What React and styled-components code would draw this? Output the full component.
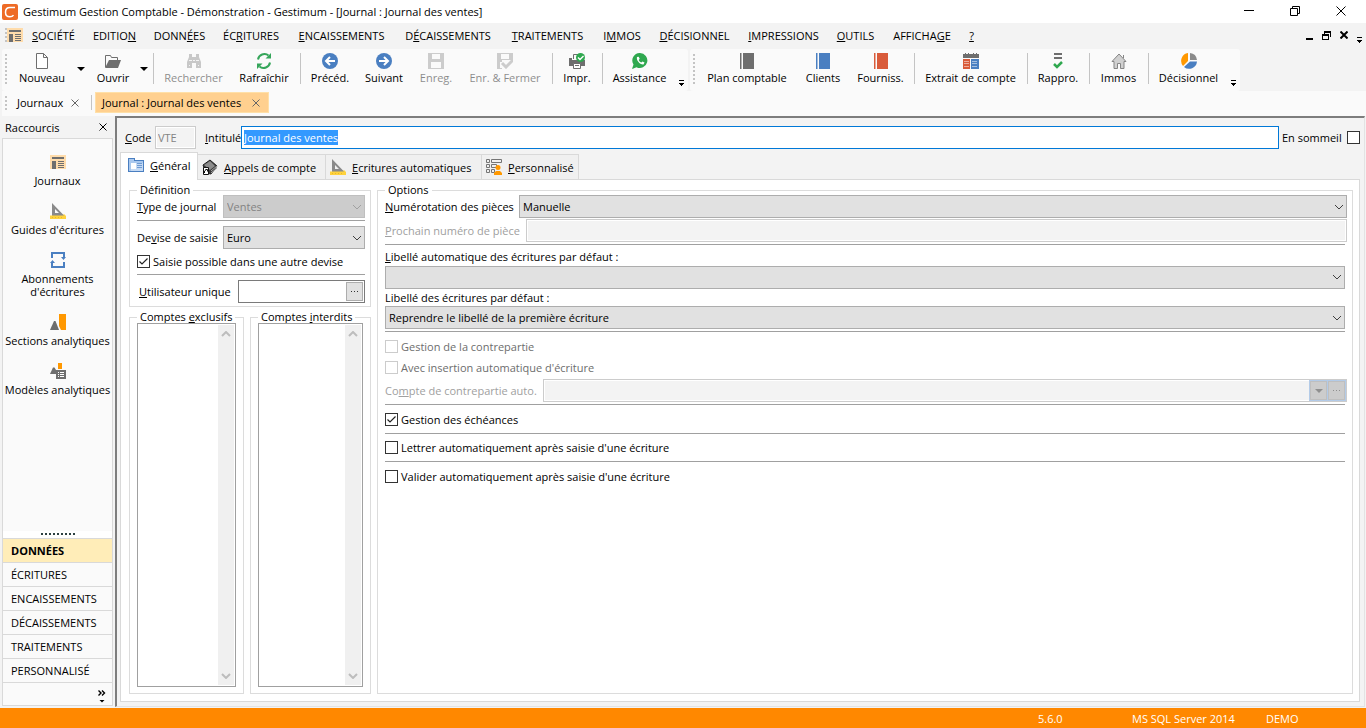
import React, { useEffect, useRef } from "react";
import styled, { createGlobalStyle, css } from "styled-components";

const Global = createGlobalStyle`
  *, *::before, *::after { box-sizing: border-box; }
  body {
    margin: 0;
    background: #f3f3f3;
    color: #000;
    font: 11px/13px "Open Sans", "Noto Sans", sans-serif;
  }
  button, input, select { font: inherit; color: inherit; margin: 0; }
  button { background: none; border: 0; padding: 0; white-space: nowrap; }
  svg { display: block; flex: none; }
`;

/* ---------- window frame ---------- */

const Window = styled.div`
  display: flex;
  flex-direction: column;
  min-height: 100vh;
`;

const TitleBar = styled.header`
  display: flex;
  align-items: center;
  gap: 5px;
  height: 23px;
  padding-left: 2px;
  background: #fff;
`;

const Title = styled.h1`
  flex: 1;
  margin: 0;
  font-size: 11px;
  font-weight: 400;
  white-space: nowrap;
`;

const WindowControls = styled.div`
  display: flex;
  align-self: flex-start;
  padding-right: 2px;
`;

const WindowButton = styled.button`
  display: flex;
  align-items: center;
  justify-content: center;
  width: 46px;
  height: 21px;
`;

const MenuBar = styled.nav`
  display: flex;
  align-items: center;
  height: 26px;
  padding: 0 0 2px 5px;
`;

const MenuItem = styled.button`
  width: ${(p) => p.$w}px;
  text-align: center;
`;

const Spacer = styled.span`
  flex: 1;
`;

const ChildControls = styled.div`
  display: flex;
  align-items: center;
  gap: 9px;
  padding-right: 4px;
`;

const Grip = styled.div`
  flex: none;
  width: 2px;
  height: ${(p) => p.$h}px;
  background: repeating-linear-gradient(#c4c4c4 0 2px, transparent 2px 4px);
`;

const OverflowButton = styled.button`
  display: flex;
  align-self: flex-end;
  justify-content: center;
  width: 14px;
  padding-bottom: ${(p) => p.$bottom}px;
`;

/* ---------- toolbars ---------- */

const ToolRow = styled.div`
  display: flex;
  gap: 2px;
  height: 42px;
  padding-left: 2px;
`;

const ToolBar = styled.div`
  display: flex;
  align-items: center;
  padding: 0 0 3px 3px;
  border-radius: 3px;
  background: #fafafa;
`;

const ToolGripBox = styled.div`
  width: 5px;
`;

const ToolButton = styled.button`
  display: flex;
  flex-direction: column;
  align-items: center;
  gap: 2px;
  width: ${(p) => p.$w}px;
  color: #000;
  &:disabled { opacity: 0.45; }
`;

const DropButton = styled.button`
  display: flex;
  justify-content: center;
  width: ${(p) => p.$w}px;
`;

const ToolSeparator = styled.span`
  width: 6px;
  height: 31px;
  background: linear-gradient(#c4c4c4, #c4c4c4) 3px 0 / 1px 100% no-repeat;
`;

/* ---------- document tabs ---------- */

const DocTabs = styled.div`
  display: flex;
  align-items: center;
  height: 25px;
  margin-left: 2px;
  padding: 0 0 2px 3px;
  background: #fafafa;
`;

const DocTab = styled.div`
  display: flex;
  align-items: center;
  justify-content: space-between;
  height: 21px;
  width: ${(p) => (p.$active ? 174 : 80)}px;
  padding: 0 8px 0 6px;
  ${(p) =>
    p.$active
      ? css`
          background: #ffd08f;
          border: 1px solid #ffe0a8;
        `
      : css`
          padding-left: 10px;
        `}
`;

const DocTabSeparator = styled.span`
  width: 1px;
  height: 15px;
  margin: 0 3px 0 4px;
  background: #c4c4c4;
`;

/* ---------- body ---------- */

const Body = styled.div`
  display: flex;
  flex: 1;
`;

const Sidebar = styled.aside`
  display: flex;
  flex-direction: column;
  width: 115px;
  padding: 0 2px 2px;
`;

const SideHeader = styled.div`
  display: flex;
  align-items: center;
  justify-content: space-between;
  height: 22px;
  padding: 0 6px 0 3px;
`;

const SideBox = styled.div`
  display: flex;
  flex: 1;
  flex-direction: column;
  border: 1px solid #d9d9d9;
  background: #fafafa;
`;

const Shortcuts = styled.div`
  display: flex;
  flex: 1;
  flex-direction: column;
  gap: 16px;
  padding-top: 15px;
`;

const Shortcut = styled.button`
  display: flex;
  flex-direction: column;
  align-items: center;
  gap: 4px;
  text-align: center;
`;

const Splitter = styled.div`
  display: flex;
  justify-content: center;
  height: 7px;
  padding-top: 2px;
  background: #fff;
`;

const SplitterDots = styled.span`
  width: 34px;
  height: 2px;
  background: repeating-linear-gradient(90deg, #2c4040 0 2px, transparent 2px 4px);
`;

const Category = styled.button`
  height: 24px;
  padding-left: 8px;
  border-top: 1px solid #d9d9d9;
  text-align: left;
  ${(p) =>
    p.$active &&
    css`
      background: #ffedb8;
      font-weight: 700;
    `}
`;

const SideFooter = styled.div`
  display: flex;
  justify-content: flex-end;
  height: 23px;
  padding: 3px 6px 0 0;
  border-top: 1px solid #d9d9d9;
`;

const Document = styled.main`
  display: flex;
  flex: 1;
  flex-direction: column;
  min-width: 0;
  margin: 0 1px 1px 0;
  padding: 8px 4px 4px 3px;
  border: 1px solid #e3e3e3;
  border-top: 2px solid #7d7d7d;
  border-left: 2px solid #7d7d7d;
`;

const Heading = styled.div`
  display: flex;
  align-items: center;
  height: 23px;
  padding-left: 5px;
`;

const Label = styled.label`
  flex: none;
  width: ${(p) => (p.$w ? `${p.$w}px` : "auto")};
  padding-left: ${(p) => (p.$inset ? 2 : 0)}px;
  color: ${(p) => (p.$dim ? "#a0a0a0" : "#000")};
  white-space: nowrap;
`;

const TextInput = styled.input.attrs({ type: "text" })`
  width: ${(p) => (p.$w ? `${p.$w}px` : "auto")};
  flex: ${(p) => (p.$w ? "none" : 1)};
  min-width: 0;
  height: 23px;
  padding: 0 2px;
  border: 1px solid #7a7a7a;
  background: #fff;
  outline: none;
  &:disabled {
    border-color: #ccc;
    background: #f3f3f3;
    color: #838383;
    box-shadow: inset 0 0 0 1px #fff;
  }
  &:focus { border-color: #0078d7; }
  &::selection { background: #3399ff; color: #fff; }
`;

const TitleGap = styled.span`
  width: 9px;
`;

const SleepLabel = styled.label`
  display: flex;
  align-items: center;
  justify-content: space-between;
  width: 81px;
  padding-left: 3px;
  white-space: nowrap;
`;

const Tick = styled.input.attrs({ type: "checkbox" })`
  flex: none;
  appearance: none;
  width: 13px;
  height: 13px;
  border: 1px solid #333;
  background: #fff;
  &:disabled { border-color: #ccc; }
`;

const TickBox = styled.span`
  display: grid;
  & > * { grid-area: 1 / 1; }
  & > svg { pointer-events: none; z-index: 1; }
  & > input:not(:checked) + svg { visibility: hidden; }
`;

const CheckRow = styled.label`
  display: flex;
  align-items: center;
  gap: 3px;
  height: ${(p) => p.$h || 21}px;
  color: ${(p) => (p.$dim ? "#6d6d6d" : "#000")};
  white-space: nowrap;
`;

/* ---------- page tabs ---------- */

const Tabs = styled.div`
  display: flex;
  align-items: flex-end;
  height: 30px;
  padding-top: 3px;
`;

const Tab = styled.button`
  display: flex;
  align-items: center;
  gap: 6px;
  width: ${(p) => p.$w}px;
  height: 25px;
  padding: 0 4px;
  border: 1px solid #d9d9d9;
  border-width: 1px 1px 0 0;
  background: #f0f0f0;
  ${(p) =>
    p.$active &&
    css`
      height: 28px;
      margin-bottom: -1px;
      padding: 0 7px 3px;
      border-left-width: 1px;
      background: #fff;
      z-index: 1;
    `}
`;

const TabPage = styled.section`
  display: flex;
  flex: 1;
  gap: 6px;
  padding: 5px 6px 7px 8px;
  border: 1px solid #d9d9d9;
  background: #fff;
`;

const LeftColumn = styled.div`
  display: flex;
  flex: none;
  flex-direction: column;
  gap: 5px;
  width: 242px;
`;

const Group = styled.fieldset`
  display: flex;
  flex-direction: column;
  flex: ${(p) => (p.$grow ? 1 : "none")};
  min-width: 0;
  margin: 0;
  padding: ${(p) => p.$pad};
  border: 1px solid #dcdcdc;
`;

const Legend = styled.legend`
  padding: 0 3px;
  line-height: 10px;
  white-space: nowrap;
`;

const ListGroups = styled.div`
  display: grid;
  flex: 1;
  grid-template-columns: 115px 1fr;
  gap: 6px;
`;

const ListBox = styled.div`
  display: flex;
  flex: 1;
  justify-content: flex-end;
  padding: 1px;
  border: 1px solid #a0a0a0;
`;

const ScrollTrack = styled.div`
  display: flex;
  flex-direction: column;
  align-items: center;
  justify-content: space-between;
  width: 16px;
  padding: 6px 0;
  background: #f0f0f0;
`;

const Row = styled.div`
  display: flex;
  align-items: center;
  height: ${(p) => p.$h || 23}px;
  margin-right: ${(p) => (p.$wide ? -2 : 0)}px;
`;

const Rule = styled.hr`
  width: 100%;
  height: 1px;
  margin: ${(p) => p.$m};
  border: 0;
  background: #a0a0a0;
`;

const SelectBox = styled.div`
  display: grid;
  flex: 1;
  min-width: 0;
  align-items: center;
  & > * { grid-area: 1 / 1; }
  & > svg { justify-self: end; margin-right: 3px; pointer-events: none; z-index: 1; }
`;

const SelectInput = styled.select`
  appearance: none;
  width: 100%;
  height: 23px;
  padding: 0 3px;
  border: 1px solid #adadad;
  border-radius: 0;
  background: #e1e1e1;
  &:disabled {
    border-color: #bfbfbf;
    background: #ccc;
    color: #838383;
    opacity: 1;
  }
`;

const Combo = styled.div`
  display: flex;
  flex: 1;
  min-width: 0;
  align-items: center;
  height: 23px;
  padding: 1px;
  border: 1px solid ${(p) => (p.$dim ? "#ccc" : "#7a7a7a")};
  background: #fff;
`;

const ComboInput = styled.input.attrs({ type: "text" })`
  flex: 1;
  min-width: 0;
  height: 19px;
  padding: 0 2px;
  border: 0;
  outline: none;
  background: #fff;
  &:disabled { background: #f3f3f3; }
`;

const ComboButtons = styled.span`
  display: flex;
  gap: 1px;
  margin: -1px;
  padding: 1px;
  background: #b3cbe8;
`;

const ComboButton = styled.button`
  display: flex;
  align-items: center;
  justify-content: center;
  width: 17px;
  height: 19px;
  border: 1px solid #adadad;
  background: #e1e1e1;
  &:disabled { border-color: #bfbfbf; background: #ccc; }
`;

const StatusBar = styled.footer`
  display: flex;
  align-items: center;
  justify-content: flex-end;
  height: 20px;
  padding-right: 67px;
  background: #ff8800;
  color: #fff;
`;

const StatusItem = styled.span`
  width: ${(p) => p.$w}px;
  white-space: nowrap;
`;

/* ---------- icons ---------- */

const Icon = ({ children, w = 16, h = 16, crisp }) => (
  <svg width={w} height={h} viewBox={`0 0 ${w} ${h}`} fill="none" aria-hidden="true" shapeRendering={crisp ? "crispEdges" : "auto"}>
    {children}
  </svg>
);

const GREY = "#6e6e6e";
const BLUE = "#4a7fc1";
const ORANGE = "#ff9800";

const LogoIcon = () => (
  <Icon>
    <rect width="16" height="16" rx="2" fill="#ee6b26" />
    <path d="M13 3.500H8C5 3.500 3.500 5.400 3.500 8.200c0 2.900 1.700 4.600 4.400 4.600 1.700 0 3-.8 3.600-1.700" stroke="#fff" strokeWidth="1.500" />
  </Icon>
);
const JournalIcon = () => (
  <Icon crisp>
    <path fill="#ffdcab" d="M0 1h16v14H0z" />
    <path fill={GREY} d="M2 3h12v2H2zM2 7h4v8H2zM8 7h6v1H8zM8 9h6v1H8zM8 11h6v1H8zM8 13h6v1H8z" />
  </Icon>
);
const SquareIcon = () => (
  <Icon>
    <path fill="#ffd23c" d="M0 12.500h2v-1h13v1h1V16H0z" />
    <path fillRule="evenodd" fill="#8a8a8a" d="M2 0l12 12.500H2zM5 6v4h4z" />
    <path d="M2.500 14v1M5.500 14v1M8.500 14v1M11.500 14v1" stroke="#e8b92a" />
  </Icon>
);
const CycleIcon = () => (
  <Icon>
    <path d="M2 6V1h12v5M14 10v5H2v-5" stroke={BLUE} strokeWidth="2" />
    <path d="M11 5h5l-2.500 3zM0 11h5L2.500 8z" fill={BLUE} />
  </Icon>
);
const SectionsIcon = () => (
  <Icon>
    <path fill={GREY} d="M0 16l4-9h1.500L9 16z" />
    <path fill={ORANGE} d="M9 0h7v16h-5l-2-4z" />
  </Icon>
);
const ModelsIcon = () => (
  <Icon>
    <path fill={GREY} d="M0 11l3-6.500h1.500L6 7v4z" />
    <path fill={ORANGE} d="M8 0h4v6H8z" />
    <path fill={GREY} d="M6 7h10v9H6z" />
    <path d="M8 9.500h1M8 11.500h1M8 13.500h1M10 9.500h4M10 11.500h4M10 13.500h4" stroke="#fff" />
  </Icon>
);
const NewIcon = () => (
  <Icon>
    <path d="M2.500 .5h7l4 4v11h-11zM9.500 .5v4h4" stroke={GREY} fill="#fff" />
  </Icon>
);
const OpenIcon = () => (
  <Icon>
    <path d="M.5 14V2.500h5l1 2h6V7" stroke={GREY} />
    <path fill={GREY} d="M4 7h12l-3 8H0z" />
  </Icon>
);
const SearchIcon = () => (
  <Icon>
    <path fill="#8d8d8d" d="M3 1h3v3h4V1h3v3l2 5v6h-5v-5H6v5H1V9l2-5z" />
    <path d="M3 7.500h3M10 7.500h3M3 12.500h1M12 12.500h1M7 7.500h2" stroke="#eee" />
  </Icon>
);
const RefreshIcon = () => (
  <Icon>
    <path d="M2 6.500a6.500 6.500 0 0 1 10.500-4M14 9.500a6.500 6.500 0 0 1-10.500 4" stroke="#35a65a" strokeWidth="2" />
    <path d="M9.500 5.500H15V0zM6.500 10.500H1V16z" fill="#35a65a" />
  </Icon>
);
const ArrowIcon = ({ back }) => (
  <Icon>
    <circle cx="8" cy="8" r="8" fill={BLUE} />
    <path d={back ? "M13 8H4M8 4L4 8l4 4" : "M3 8h9M8 4l4 4-4 4"} stroke="#fff" strokeWidth="2" />
  </Icon>
);
const SaveIcon = ({ check }) => (
  <Icon>
    <path fillRule="evenodd" fill="#969696" d="M0 0h16v16H0zM4 1v5h8V1zM3 9v6h10V9z" />
    <path fill="#fafafa" d="M4 1h5v4H4zM3 9h10v6H3z" />
    {check && <path fill="#fafafa" d="M5 7h11v9H5z" />}
    {check && <path d="M5 10l4 4 7-7" stroke="#969696" strokeWidth="3" />}
  </Icon>
);
const PrintIcon = () => (
  <Icon>
    <path d="M4.500 6V1.500h6" stroke={GREY} />
    <path fill={GREY} d="M0 5h3v2h13v6H0z" />
    <path fill="#fff" stroke={GREY} d="M4.500 10.500h7v5h-7z" />
    <path d="M6 12.500h4" stroke={GREY} />
    <circle cx="11.500" cy="4.500" r="4.500" fill="#2fa84f" />
    <path d="M9 4.500l2 2 3.500-3.500" stroke="#fff" strokeWidth="1.400" />
  </Icon>
);
const AssistIcon = () => (
  <Icon>
    <path d="M8 0a7.500 7.500 0 1 1-3.500 14.200L0 16l1.500-4.500A7.500 7.500 0 0 1 8 0z" fill="#2fa84f" />
    <path d="M5 4c-1 3 3 8 6.500 7.500l1-2-2-1-1.200 1C8 9 7 8 6.700 7l1-1.200-1-2z" fill="#fff" />
  </Icon>
);
const BookIcon = ({ color }) => (
  <Icon w={14} crisp>
    <path fill={color} d="M0 0h1v16H0zM3 0h11v16H3z" />
    <path fill={color} opacity=".5" d="M1 0h1v16H1z" />
  </Icon>
);
const StatementIcon = () => (
  <Icon crisp>
    <path fill={GREY} d="M0 1h2V0h1v1h2V0h1v1h4V0h1v1h2V0h1v1h2v4H0z" />
    <path fill="#d95b3a" d="M0 6h7v10H0z" />
    <path fill={BLUE} d="M8 6h8v10H8z" />
    <path stroke="#fff" opacity=".5" d="M1 8.500h5M1 10.500h5M1 13.500h5M9 8.500h5M9 10.500h5M9 13.500h5" />
  </Icon>
);
const ReconcileIcon = () => (
  <Icon>
    <path fill={GREY} d="M4 0h8v2H4zM4 4h8v2H4z" />
    <path d="M4 11l3 3 5-5" stroke="#2fa84f" strokeWidth="2.500" />
  </Icon>
);
const HouseIcon = () => (
  <Icon>
    <path fill="#d0d0d0" stroke="#858585" d="M1 8.500L8 1l7 7.500h-2v7H9.500v-5h-3v5H3v-7z" />
    <path d="M12.500 2v3" stroke="#858585" />
  </Icon>
);
const PieIcon = () => (
  <Icon>
    <path fill={ORANGE} d="M7 0v8l-5 5A8 8 0 0 1 7 0z" />
    <path fill="#8a8a8a" d="M9 0a8 8 0 0 1 7 7H9z" />
    <path fill={BLUE} d="M3 14l6-5.500h7A8 8 0 0 1 3 14z" />
  </Icon>
);
const GeneralIcon = () => (
  <Icon crisp>
    <path fill="#4a7fc1" d="M0 1h7v2h9v12H0z" />
    <path fill="#a9c8ee" d="M1 2h5v2h9v10H1z" />
    <path fill="#c5daf4" d="M3 6h12v8H3z" />
    <path fill="#fff" d="M3 6h5v6H3z" />
    <path stroke="#6f9bd3" d="M9 6.500h5M9 8.500h5M9 10.500h5" />
  </Icon>
);
const CallsIcon = () => (
  <Icon>
    <path d="M1 6l7-5 7 6-6 8-5-1z" fill="#3a3a3a" stroke="#222" />
    <path d="M2 6l6-4 5 5-5 4z" fill="#8c8c8c" />
    <path d="M9 12l6-5M9 14l6-5" stroke="#aaa" />
    <path d="M1.500 8.500h5v7h-5z" fill="#fff" stroke="#111" />
    <path d="M2.500 14v-2l2-1.500M3.500 10.500h2v2" stroke="#111" />
  </Icon>
);
const CustomIcon = () => (
  <Icon>
    <path d="M.5 .5h3v3h-3zM.5 5.500h3v3h-3zM.5 10.500h3v3h-3zM5.500 .5h10v3h-10zM5.500 5.500h5v3h-5zM5.500 10.500h3v3h-3z" stroke="#757575" />
    <circle cx="12" cy="8.500" r="2.500" fill={ORANGE} />
    <path fill={ORANGE} d="M8 16v-2l2-2h4l2 2v2z" />
  </Icon>
);
const Cross = ({ size = 8, color = "#000", width = 1 }) => (
  <Icon w={size} h={size}>
    <path d={`M.5 .5l${size - 1} ${size - 1}M${size - 0.5} .5l-${size - 1} ${size - 1}`} stroke={color} strokeWidth={width} />
  </Icon>
);
const Chevron = ({ color = "#404040", width = 1, up }) => (
  <Icon w={10} h={6}>
    <path d={up ? "M1 5l4-4 4 4" : "M1 1l4 4 4-4"} stroke={color} strokeWidth={width} />
  </Icon>
);
const Triangle = ({ color = "#000", w = 8 }) => (
  <Icon w={w} h={w / 2}>
    <path d={`M0 0h${w}l-${w / 2} ${w / 2}z`} fill={color} />
  </Icon>
);
const MoreIcon = () => (
  <Icon w={5} h={6} crisp>
    <path d="M0 0h5v1H0zM0 3h5v1H0zM1 4h3v1H1zM2 5h1v1H2z" fill="#000" />
  </Icon>
);
const Dots = ({ color = "#333" }) => (
  <Icon w={8} h={1} crisp>
    <path d="M0 0h1v1H0zM3 0h1v1H3zM6 0h1v1H6z" fill={color} />
  </Icon>
);
const FooterIcon = () => (
  <Icon w={8} h={14}>
    <path d="M.5 1.500L3 4 .5 6.500M4 1.500L6.500 4 4 6.500" stroke="#000" strokeWidth="1.400" />
    <path d="M1.500 11h5L4 13.500z" fill="#000" />
  </Icon>
);

/* ---------- data ---------- */

const menus = [
  ["", "S", "OCIÉTÉ", 61],
  ["EDITIO", "N", "", 61],
  ["DONN", "É", "ES", 69],
  ["ÉC", "R", "ITURES", 74],
  ["", "E", "NCAISSEMENTS", 107],
  ["D", "É", "CAISSEMENTS", 106],
  ["", "T", "RAITEMENTS", 93],
  ["I", "M", "MOS", 56],
  ["", "D", "ÉCISIONNEL", 89],
  ["", "I", "MPRESSIONS", 89],
  ["", "O", "UTILS", 55],
  ["AFFICHA", "G", "E", 78],
  ["", "?", "", 21],
];

const mainTools = [
  { label: "Nouveau", icon: <NewIcon />, w: 64 },
  { drop: "Nouveau : options", w: 14 },
  { label: "Ouvrir", icon: <OpenIcon />, w: 50 },
  { drop: "Ouvrir : options", w: 12 },
  null,
  { label: "Rechercher", icon: <SearchIcon />, w: 75, disabled: true },
  { label: "Rafraîchir", icon: <RefreshIcon />, w: 66 },
  null,
  { label: "Précéd.", icon: <ArrowIcon back />, w: 54 },
  { label: "Suivant", icon: <ArrowIcon />, w: 54 },
  { label: "Enreg.", icon: <SaveIcon />, w: 50, disabled: true },
  { label: "Enr. & Fermer", icon: <SaveIcon check />, w: 88, disabled: true },
  null,
  { label: "Impr.", icon: <PrintIcon />, w: 44 },
  null,
  { label: "Assistance", icon: <AssistIcon />, w: 69 },
];

const linkTools = [
  { label: "Plan comptable", icon: <BookIcon color={GREY} />, w: 98 },
  { label: "Clients", icon: <BookIcon color={BLUE} />, w: 54 },
  { label: "Fourniss.", icon: <BookIcon color="#d95b3a" />, w: 61 },
  null,
  { label: "Extrait de compte", icon: <StatementIcon />, w: 107 },
  null,
  { label: "Rappro.", icon: <ReconcileIcon />, w: 56 },
  null,
  { label: "Immos", icon: <HouseIcon />, w: 53 },
  null,
  { label: "Décisionnel", icon: <PieIcon />, w: 75 },
];

const shortcuts = [
  [<JournalIcon />, "Journaux"],
  [<SquareIcon />, "Guides d'écritures"],
  [<CycleIcon />, "Abonnements", "d'écritures"],
  [<SectionsIcon />, "Sections analytiques"],
  [<ModelsIcon />, "Modèles analytiques"],
];

const categories = ["DONNÉES", "ÉCRITURES", "ENCAISSEMENTS", "DÉCAISSEMENTS", "TRAITEMENTS", "PERSONNALISÉ"];

/* ---------- parts ---------- */

const Tools = ({ items }) => (
  <ToolBar>
    <ToolGripBox><Grip $h={30} /></ToolGripBox>
    {items.map((t, i) => {
      if (!t) return <ToolSeparator key={i} />;
      if (t.drop) return <DropButton key={i} $w={t.w} aria-label={t.drop}><Triangle /></DropButton>;
      return (
        <ToolButton key={i} $w={t.w} disabled={t.disabled}>
          {t.icon}
          <span>{t.label}</span>
        </ToolButton>
      );
    })}
    <OverflowButton $bottom={2} aria-label="Plus de boutons"><MoreIcon /></OverflowButton>
  </ToolBar>
);

const Dropdown = ({ id, value, disabled }) => (
  <SelectBox>
    <SelectInput id={id} disabled={disabled} defaultValue={value}>
      <option>{value}</option>
    </SelectInput>
    <Chevron color={disabled ? "#a0a0a0" : "#404040"} />
  </SelectBox>
);

const Check = ({ h, disabled, checked, children }) => (
  <CheckRow $h={h} $dim={disabled}>
    <TickBox>
      <Tick disabled={disabled} defaultChecked={checked} />
      <Icon w={13} h={13}>
        <path d="M2.500 6.500L5 9l5.500-5.500" stroke="#222" strokeWidth="1.200" />
      </Icon>
    </TickBox>
    {children}
  </CheckRow>
);

const AccountList = ({ children }) => (
  <Group $pad="1px 7px 6px">
    <Legend>{children}</Legend>
    <ListBox>
      <ScrollTrack>
        <Chevron up color="#bdbdbd" width={2} />
        <Chevron color="#bdbdbd" width={2} />
      </ScrollTrack>
    </ListBox>
  </Group>
);

export default function App() {
  const titleRef = useRef(null);
  useEffect(() => {
    titleRef.current.focus();
    titleRef.current.select();
  }, []);

  return (
    <Window>
      <Global />
      <TitleBar>
        <LogoIcon />
        <Title>Gestimum Gestion Comptable - Démonstration - Gestimum - [Journal : Journal des ventes]</Title>
        <WindowControls>
          <WindowButton aria-label="Réduire">
            <Icon w={10} h={1} crisp><path d="M0 0h10v1H0z" fill="#000" /></Icon>
          </WindowButton>
          <WindowButton aria-label="Restaurer">
            <Icon w={10} h={10}><path d="M.5 2.500h7v7h-7zM2.500 2.500v-2h7v7h-2" stroke="#000" /></Icon>
          </WindowButton>
          <WindowButton aria-label="Fermer"><Cross size={10} /></WindowButton>
        </WindowControls>
      </TitleBar>

      <MenuBar>
        <Grip $h={14} />
        <JournalIcon />
        {menus.map(([before, key, after, w]) => (
          <MenuItem key={before + key + after} $w={w}>{before}<u>{key}</u>{after}</MenuItem>
        ))}
        <Spacer />
        <ChildControls>
          <button aria-label="Réduire le journal">
            <Icon w={7} h={9} crisp><path d="M0 7h7v2H0z" fill="#000" /></Icon>
          </button>
          <button aria-label="Restaurer le journal">
            <Icon w={9} h={9} crisp><path d="M0 3h7v6H0zM1 5v3h5V5zM2 0h7v6H8V2H3v1H2z" fill="#000" fillRule="evenodd" /></Icon>
          </button>
          <button aria-label="Fermer le journal"><Cross width={2} /></button>
        </ChildControls>
        <OverflowButton $bottom={4} aria-label="Plus de menus"><MoreIcon /></OverflowButton>
      </MenuBar>

      <ToolRow>
        <Tools items={mainTools} />
        <Tools items={linkTools} />
      </ToolRow>

      <DocTabs>
        <Grip $h={14} />
        <DocTab>Journaux<Cross color="#666" /></DocTab>
        <DocTabSeparator />
        <DocTab $active>Journal : Journal des ventes<Cross color="#666" /></DocTab>
      </DocTabs>

      <Body>
        <Sidebar>
          <SideHeader>Raccourcis<button aria-label="Fermer les raccourcis"><Cross /></button></SideHeader>
          <SideBox>
            <Shortcuts>
              {shortcuts.map(([icon, ...lines]) => (
                <Shortcut key={lines[0]}>
                  {icon}
                  <span>{lines.map((l, i) => <React.Fragment key={l}>{i > 0 && <br />}{l}</React.Fragment>)}</span>
                </Shortcut>
              ))}
            </Shortcuts>
            <Splitter><SplitterDots /></Splitter>
            {categories.map((c, i) => <Category key={c} $active={i === 0}>{c}</Category>)}
            <SideFooter><button aria-label="Configurer"><FooterIcon /></button></SideFooter>
          </SideBox>
        </Sidebar>

        <Document>
          <Heading>
            <Label htmlFor="code" $w={30}><u>C</u>ode</Label>
            <TextInput id="code" $w={41} defaultValue="VTE" disabled />
            <TitleGap />
            <Label htmlFor="title" $w={36}><u>I</u>ntitulé</Label>
            <TextInput id="title" ref={titleRef} defaultValue="Journal des ventes" />
            <SleepLabel>En sommeil<Tick /></SleepLabel>
          </Heading>

          <Tabs role="tablist">
            <Tab role="tab" $w={78} $active><GeneralIcon /><span><u>G</u>énéral</span></Tab>
            <Tab role="tab" $w={128}><CallsIcon /><span><u>A</u>ppels de compte</span></Tab>
            <Tab role="tab" $w={156}><SquareIcon /><span><u>E</u>critures automatiques</span></Tab>
            <Tab role="tab" $w={97}><CustomIcon /><span><u>P</u>ersonnalisé</span></Tab>
          </Tabs>

          <TabPage>
            <LeftColumn>
              <Group $pad="0 5px 3px 7px">
                <Legend>Définition</Legend>
                <Row>
                  <Label htmlFor="type" $w={86}><u>T</u>ype de journal</Label>
                  <Dropdown id="type" value="Ventes" disabled />
                </Row>
                <Rule $m="2px 0 5px" />
                <Row>
                  <Label htmlFor="currency" $w={86}>De<u>v</u>ise de saisie</Label>
                  <Dropdown id="currency" value="Euro" />
                </Row>
                <Check h={25} checked>Saisie possible dans une autre devise</Check>
                <Rule $m="0 0 5px" />
                <Row>
                  <Label htmlFor="user" $w={101} $inset><u>U</u>tilisateur unique</Label>
                  <Combo>
                    <ComboInput id="user" />
                    <ComboButton aria-label="Choisir un utilisateur"><Dots /></ComboButton>
                  </Combo>
                </Row>
              </Group>
              <ListGroups>
                <AccountList>Comptes <u>e</u>xclusifs</AccountList>
                <AccountList>Comptes <u>i</u>nterdits</AccountList>
              </ListGroups>
            </LeftColumn>

            <Group $grow $pad="0 7px">
              <Legend>Options</Legend>
              <Row $wide>
                <Label htmlFor="numbering" $w={134}><u>N</u>umérotation des pièces</Label>
                <Dropdown id="numbering" value="Manuelle" />
              </Row>
              <Row $wide $h={25}>
                <Label htmlFor="next" $w={141} $dim><u>P</u>rochain numéro de pièce</Label>
                <TextInput id="next" disabled />
              </Row>
              <Rule $m="1px 0 5px" />
              <Label htmlFor="auto"><u>L</u>ibellé automatique des écritures par défaut :</Label>
              <Row $h={28}><Dropdown id="auto" value="" /></Row>
              <Label htmlFor="default">Libellé des écritures par défaut :</Label>
              <Row $h={27}><Dropdown id="default" value="Reprendre le libellé de la première écriture" /></Row>
              <Rule $m="0 0 4px" />
              <Check disabled>Gestion de la contrepartie</Check>
              <Check disabled>Avec insertion automatique d'écriture</Check>
              <Row $wide $h={25}>
                <Label htmlFor="counterpart" $w={158} $dim>Co<u>m</u>pte de contrepartie auto.</Label>
                <Combo $dim>
                  <ComboInput id="counterpart" disabled />
                  <ComboButtons>
                    <ComboButton disabled aria-label="Liste des comptes"><Triangle color="#8f8f8f" /></ComboButton>
                    <ComboButton disabled aria-label="Choisir un compte"><Dots color="#8f8f8f" /></ComboButton>
                  </ComboButtons>
                </Combo>
              </Row>
              <Rule $m="1px 0 0" />
              <Check h={28} checked>Gestion des échéances</Check>
              <Rule $m="0" />
              <Check h={27}>Lettrer automatiquement après saisie d'une écriture</Check>
              <Rule $m="0" />
              <Check h={28}>Valider automatiquement après saisie d'une écriture</Check>
            </Group>
          </TabPage>
        </Document>
      </Body>

      <StatusBar>
        <StatusItem $w={94}>5.6.0</StatusItem>
        <StatusItem $w={134}>MS SQL Server 2014</StatusItem>
        <StatusItem $w={33}>DEMO</StatusItem>
      </StatusBar>
    </Window>
  );
}
